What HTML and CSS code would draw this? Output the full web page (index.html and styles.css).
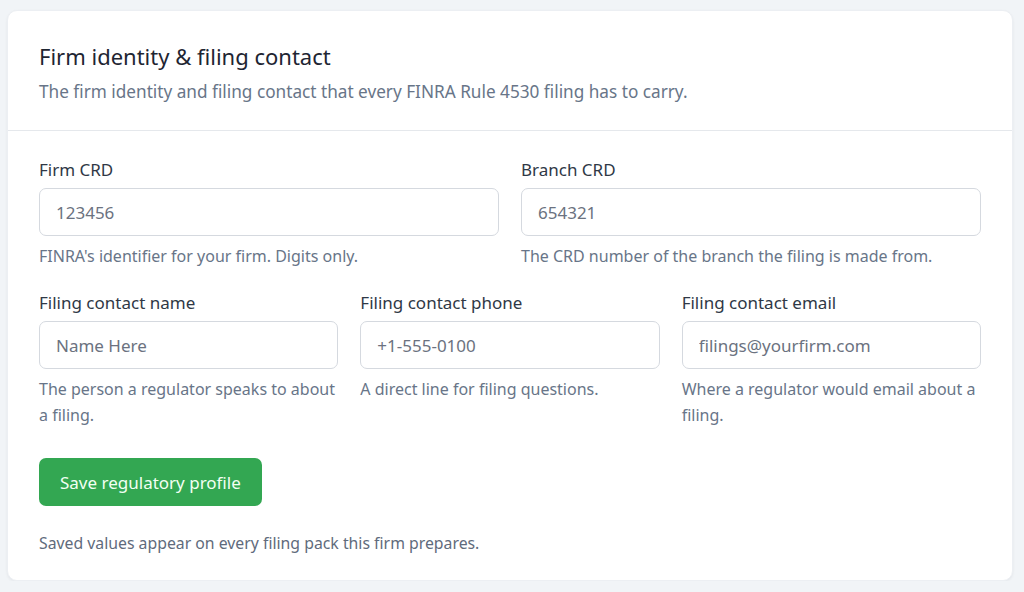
FILE: index.html
```html
<!DOCTYPE html>
<html lang="en">
<head>
<meta charset="utf-8">
<title>Firm identity &amp; filing contact</title>
<link rel="stylesheet" href="styles.css">
</head>
<body>
<section class="card">
  <header class="card-head">
    <h2 class="title">Firm identity &amp; filing contact</h2>
    <p class="subtitle">The firm identity and filing contact that every FINRA Rule 4530 filing has to carry.</p>
  </header>
  <form class="card-body">
    <div class="row row-2">
      <div class="field">
        <label class="label" for="crd">Firm CRD</label>
        <input class="input" id="crd" type="text" placeholder="123456">
        <p class="help">FINRA's identifier for your firm. Digits only.</p>
      </div>
      <div class="field">
        <label class="label" for="bcrd">Branch CRD</label>
        <input class="input" id="bcrd" type="text" placeholder="654321">
        <p class="help">The CRD number of the branch the filing is made from.</p>
      </div>
    </div>
    <div class="row row-3">
      <div class="field">
        <label class="label" for="cname">Filing contact name</label>
        <input class="input" id="cname" type="text" placeholder="Name Here">
        <p class="help">The person a regulator speaks to about a filing.</p>
      </div>
      <div class="field">
        <label class="label" for="cphone">Filing contact phone</label>
        <input class="input" id="cphone" type="text" placeholder="+1-555-0100">
        <p class="help">A direct line for filing questions.</p>
      </div>
      <div class="field">
        <label class="label" for="cemail">Filing contact email</label>
        <input class="input" id="cemail" type="text" placeholder="filings@yourfirm.com">
        <p class="help">Where a regulator would email about a filing.</p>
      </div>
    </div>
    <div class="actions">
      <button class="btn" type="button">Save regulatory profile</button>
    </div>
    <p class="note">Saved values appear on every filing pack this firm prepares.</p>
  </form>
</section>
</body>
</html>
```

FILE: styles.css
```css
* { box-sizing: border-box; }
html, body { margin: 0; }
body {
  background: #f1f4f7;
  font-family: "Noto Sans", "Open Sans", "Liberation Sans", sans-serif;
  font-size: 16px;
  color: #1f2937;
  padding: 10px 11px 0 7px;
}
.card {
  background: #fff;
  border-radius: 10px;
  box-shadow: 0 1px 3px rgba(15, 23, 42, 0.06);
  border: 1px solid #eceff3;
}
.card-head {
  padding: 31px 31px 26px;
  border-bottom: 1px solid #e5e8ec;
}
.title {
  margin: 0;
  font-size: 22px;
  font-weight: 400;
  line-height: 28px;
  color: #1e2532;
}
.subtitle {
  margin: 10px 0 0;
  font-size: 17.2px;
  line-height: 24px;
  color: #687588;
}
.card-body {
  padding: 27px 31px 25px;
  display: flex;
  flex-direction: column;
}
.row {
  display: grid;
  gap: 22px;
}
.row + .row { margin-top: 22px; }
.row-2 { grid-template-columns: 1fr 1fr; }
.row-3 { grid-template-columns: 1fr 1fr 1fr; }
.field { display: flex; flex-direction: column; min-width: 0; }
.label {
  font-size: 17px;
  line-height: 24px;
  color: #2f3846;
  margin-bottom: 6px;
}
.input {
  height: 48px;
  border: 1px solid #d5d9df;
  border-radius: 7px;
  padding: 0 16px;
  font: inherit;
  font-size: 17px;
  color: #1f2937;
  background: #fff;
  outline: none;
}
.input::placeholder { color: #6b7280; opacity: 1; }
.help {
  margin: 7px 0 0;
  font-size: 16px;
  line-height: 26px;
  color: #687588;
}
.actions { margin-top: 30px; display: flex; }
.btn {
  height: 48px;
  padding: 0 21px;
  background: #33a752;
  color: #f2fff2;
  border: none;
  border-radius: 7px;
  font: inherit;
  font-size: 17px;
  cursor: pointer;
}
.note {
  margin: 25px 0 0;
  font-size: 15.8px;
  line-height: 24px;
  color: #5f6b7c;
}
```
